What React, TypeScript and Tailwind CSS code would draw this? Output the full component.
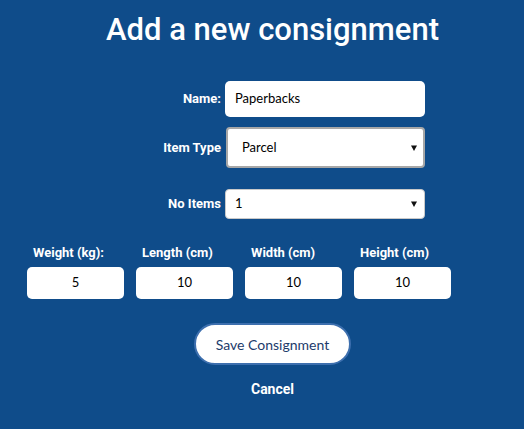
import React from "react";

const Tri = () => (
  <svg width="6" height="6" viewBox="0 0 6 6" className="block">
    <path d="M0 0.5 H6 L3 6 Z" fill="#111" />
  </svg>
);

export default function App() {
  const dims = [
    { label: "Weight (kg):", value: "5" },
    { label: "Length (cm)", value: "10" },
    { label: "Width (cm)", value: "10" },
    { label: "Height (cm)", value: "10" },
  ];
  return (
    <div className="w-[524px] h-[429px] bg-[#0f4c8a] text-white overflow-hidden" style={{ fontFamily: "Roboto, sans-serif" }}>
      <div className="pl-[21px] flex flex-col items-center">
        <h1 className="mt-[10px] text-[31px] leading-[40px] font-medium">Add a new consignment</h1>
      </div>

      <div className="mt-[31px] flex flex-col">
        <div className="flex items-center">
          <div className="w-[221px] text-right text-[13px] font-bold">Name:</div>
          <div className="ml-[4px] w-[200px] h-[36px] bg-white rounded-[5px] flex items-center pl-[10px] text-[13px] text-black" style={{ fontFamily: "Lato, sans-serif" }}>
            Paperbacks
          </div>
        </div>
        <div className="mt-[10px] flex items-center">
          <div className="w-[221px] text-right text-[13px] font-bold">Item Type</div>
          <div className="ml-[5px] w-[199px] h-[41px] bg-white rounded-[4px] border-2 border-[#a7a7a7] flex items-center justify-between pl-[14px] pr-[6px] text-[13px] text-black" style={{ fontFamily: "Lato, sans-serif" }}>
            <span>Parcel</span>
            <Tri />
          </div>
        </div>
        <div className="mt-[21px] flex items-center">
          <div className="w-[221px] text-right text-[13px] font-bold">No Items</div>
          <div className="ml-[4px] w-[200px] h-[30px] bg-white rounded-[4px] border border-[#c9c9c9] flex items-center justify-between pl-[9px] pr-[7px] text-[13px] text-black" style={{ fontFamily: "Lato, sans-serif" }}>
            <span>1</span>
            <Tri />
          </div>
        </div>
      </div>

      <div className="mt-[26px] ml-[27px] grid grid-cols-[97px_97px_97px_97px] gap-x-[12px]">
        {dims.map((d) => (
          <div key={d.label} className="flex flex-col">
            <div className="pl-[6px] text-[13px] font-bold leading-[16px]">{d.label}</div>
            <div className="mt-[6px] h-[32px] bg-white rounded-[5px] flex items-center justify-center text-[13px] text-black" style={{ fontFamily: "Lato, sans-serif" }}>
              {d.value}
            </div>
          </div>
        ))}
      </div>

      <div className="pl-[21px] flex flex-col items-center">
        <button className="mt-[24px] w-[157px] h-[42px] bg-white rounded-full border-2 border-[#3d6fae] text-[#1c3b6b] text-[14px]" style={{ fontFamily: "Lato, sans-serif" }}>
          Save Consignment
        </button>
        <div className="mt-[14px] text-[14px] font-bold">Cancel</div>
      </div>
    </div>
  );
}
